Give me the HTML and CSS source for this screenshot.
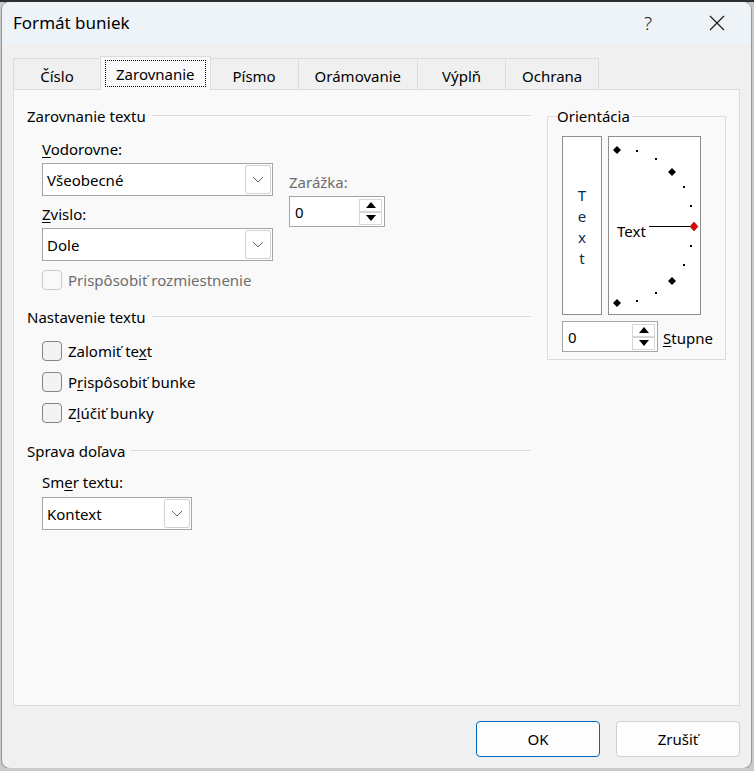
FILE: index.html
```html
<!DOCTYPE html>
<html lang="sk">
<head>
    <meta charset="UTF-8">
    <title>Formát buniek</title>
    <link rel="stylesheet" href="styles.css">
</head>
<body>

<div class="window">
    <div class="titlebar">
        <span class="title">Formát buniek</span>
        <span class="title-btn help">?</span>
        <span class="title-btn close">
            <svg width="16" height="16" viewBox="0 0 16 16"><path d="M1 1 L15 15 M15 1 L1 15" stroke="#1b1b1b" stroke-width="1.2" fill="none"/></svg>
        </span>
    </div>

    <div class="dialog-body">
        <div class="tabs">
            <div class="tab">Číslo</div>
            <div class="tab active"><span class="focus">Zarovnanie</span></div>
            <div class="tab">Písmo</div>
            <div class="tab">Orámovanie</div>
            <div class="tab">Výplň</div>
            <div class="tab">Ochrana</div>
        </div>

        <div class="panel">
            <div class="col-left">
                <div class="group-head">Zarovnanie textu</div>

                <div class="align-block">
                    <div class="align-main">
                        <div class="field-label"><u>V</u>odorovne:</div>
                        <div class="select wide">
                            <span>Všeobecné</span>
                            <span class="drop"><svg width="12" height="7" viewBox="0 0 12 7"><path d="M1 1 L6 6 L11 1" stroke="#666" fill="none"/></svg></span>
                        </div>
                        <div class="field-label second"><u>Z</u>vislo:</div>
                        <div class="select wide">
                            <span>Dole</span>
                            <span class="drop"><svg width="12" height="7" viewBox="0 0 12 7"><path d="M1 1 L6 6 L11 1" stroke="#666" fill="none"/></svg></span>
                        </div>
                    </div>
                    <div class="align-indent">
                        <div class="field-label muted">Zarážka:</div>
                        <div class="spin">
                            <span class="spin-value">0</span>
                            <span class="spin-btns">
                                <span class="spin-btn"><svg width="10" height="6" viewBox="0 0 10 6"><path d="M0 6 L5 0 L10 6 Z" fill="#000"/></svg></span>
                                <span class="spin-btn"><svg width="10" height="6" viewBox="0 0 10 6"><path d="M0 0 L5 6 L10 0 Z" fill="#000"/></svg></span>
                            </span>
                        </div>
                    </div>
                </div>

                <label class="check disabled"><span class="box"></span><span>Prispôsobiť rozmiestnenie</span></label>

                <div class="group-head">Nastavenie textu</div>
                <div class="check-list">
                    <label class="check"><span class="box"></span><span>Zalomiť te<u>x</u>t</span></label>
                    <label class="check"><span class="box"></span><span>P<u>r</u>ispôsobiť bunke</span></label>
                    <label class="check"><span class="box"></span><span>Z<u>l</u>účiť bunky</span></label>
                </div>

                <div class="group-head">Sprava doľava</div>
                <div class="field-label rtl-label">Sm<u>e</u>r textu:</div>
                <div class="select narrow">
                    <span>Kontext</span>
                    <span class="drop"><svg width="12" height="7" viewBox="0 0 12 7"><path d="M1 1 L6 6 L11 1" stroke="#666" fill="none"/></svg></span>
                </div>
            </div>

            <fieldset class="orient">
                <legend>Orientácia</legend>
                <div class="orient-boxes">
                    <div class="vertical-text">
                        <span>T</span><span>e</span><span>x</span><span>t</span>
                    </div>
                    <div class="dial">
                        <svg width="91" height="177" viewBox="0 0 91 177">
                            <g fill="#000">
                                <path d="M8 9 l4 4 l-4 4 l-4 -4 Z"/>
                                <path d="M63 31 l4 4 l-4 4 l-4 -4 Z"/>
                                <path d="M63 140 l4 4 l-4 4 l-4 -4 Z"/>
                                <path d="M8 162 l4 4 l-4 4 l-4 -4 Z"/>
                                <rect x="27" y="13" width="2" height="2"/>
                                <rect x="46" y="21" width="2" height="2"/>
                                <rect x="74" y="49" width="2" height="2"/>
                                <rect x="81" y="68" width="2" height="2"/>
                                <rect x="81" y="108" width="2" height="2"/>
                                <rect x="74" y="127" width="2" height="2"/>
                                <rect x="46" y="155" width="2" height="2"/>
                                <rect x="27" y="163" width="2" height="2"/>
                            </g>
                            <line x1="40" y1="89.5" x2="81" y2="89.5" stroke="#000" stroke-width="1"/>
                            <path d="M85 85 l4 4.5 l-4 4.5 l-4 -4.5 Z" fill="#e00000" stroke="#600" stroke-width="0.5"/>
                            <text x="8" y="100" class="dial-text">Text</text>
                        </svg>
                    </div>
                </div>
                <div class="orient-row">
                    <div class="spin">
                        <span class="spin-value">0</span>
                        <span class="spin-btns">
                            <span class="spin-btn"><svg width="10" height="6" viewBox="0 0 10 6"><path d="M0 6 L5 0 L10 6 Z" fill="#000"/></svg></span>
                            <span class="spin-btn"><svg width="10" height="6" viewBox="0 0 10 6"><path d="M0 0 L5 6 L10 0 Z" fill="#000"/></svg></span>
                        </span>
                    </div>
                    <span class="field-label"><u>S</u>tupne</span>
                </div>
            </fieldset>
        </div>

        <div class="buttons">
            <button class="btn primary">OK</button>
            <button class="btn">Zrušiť</button>
        </div>
    </div>
</div>

</body>
</html>
```

FILE: styles.css
```css
/* Global */
body {
    margin: 0;
    background-color: #c9c9c9;
    border-top: 2px solid #2e2e2e;
    font-family: 'Noto Sans', 'Open Sans', sans-serif;
    font-size: 15px;
    color: #000;
}

u {
    text-decoration-thickness: 1px;
    text-underline-offset: 2px;
}

/* Window */
.window {
    width: 749px;
    height: 766px;
    margin-left: 2px;
    background-color: #f0f0f0;
    border-radius: 8px;
    overflow: hidden;
    box-shadow: 0 0 0 1px rgba(0, 0, 0, 0.25);
    display: flex;
    flex-direction: column;
}

.titlebar {
    height: 42px;
    flex-shrink: 0;
    background-color: #eef3f8;
    display: flex;
    align-items: center;
    padding-left: 11px;
}

.title {
    font-size: 17px;
    margin-top: -2px;
}

.title-btn {
    width: 46px;
    height: 42px;
    display: flex;
    align-items: center;
    justify-content: center;
}

.help {
    margin-left: auto;
    margin-right: 23px;
    font-size: 19px;
    font-weight: 300;
    color: #222;
}

.close {
    margin-right: 11px;
}

.dialog-body {
    flex: 1;
    display: flex;
    flex-direction: column;
    padding: 12px 11px 11px 11px;
}

/* Tabs */
.tabs {
    display: flex;
    height: 33px;
    align-items: flex-end;
}

.tab {
    height: 31px;
    box-sizing: border-box;
    min-width: 89px;
    padding: 3px 16px 0;
    border: 1px solid #dcdcdc;
    border-bottom: none;
    margin-right: -1px;
    background-color: #f0f0f0;
    display: flex;
    align-items: center;
    justify-content: center;
}

.tab:first-child {
    min-width: 88px;
}

.tab.active {
    height: 34px;
    margin-bottom: -1px;
    background-color: #f9f9f9;
    position: relative;
    z-index: 1;
    padding: 3px 4px 3px;
}

.focus {
    border: 1px dotted #000;
    height: 100%;
    box-sizing: border-box;
    padding: 0 10px;
    display: flex;
    align-items: center;
}

/* Panel */
.panel {
    height: 617px;
    box-sizing: border-box;
    background-color: #f9f9f9;
    border: 1px solid #dcdcdc;
    padding: 16px 13px 0 13px;
    display: flex;
    gap: 16px;
    align-items: flex-start;
}

.col-left {
    width: 504px;
    display: flex;
    flex-direction: column;
}

.group-head {
    height: 20px;
    display: flex;
    align-items: center;
}

.group-head::after {
    content: "";
    flex: 1;
    border-top: 1px solid #dcdcdc;
    margin-left: 6px;
    margin-top: -2px;
}

.field-label {
    line-height: 20px;
}

.muted {
    color: #6d6d6d;
}

/* Alignment block */
.align-block {
    display: flex;
    gap: 16px;
    margin-top: 13px;
    padding-left: 15px;
}

.align-main {
    display: flex;
    flex-direction: column;
    width: 231px;
}

.align-main .select {
    margin-top: 4px;
}

.field-label.second {
    margin-top: 8px;
}

.align-indent {
    margin-top: 33px;
    display: flex;
    flex-direction: column;
    gap: 4px;
}

/* Select boxes */
.select {
    height: 33px;
    box-sizing: border-box;
    border: 1px solid #a5a5a5;
    background-color: #fff;
    display: flex;
    align-items: center;
    padding-left: 4px;
}

.select.narrow {
    width: 150px;
    margin-left: 15px;
    margin-top: 5px;
}

.drop {
    margin-left: auto;
    margin-right: 1px;
    width: 26px;
    height: 29px;
    box-sizing: border-box;
    border: 1px solid #d2d2d2;
    border-radius: 2px;
    display: flex;
    align-items: center;
    justify-content: center;
}

/* Spin boxes */
.spin {
    width: 96px;
    height: 31px;
    box-sizing: border-box;
    border: 1px solid #a5a5a5;
    background-color: #fff;
    display: flex;
    align-items: center;
    padding-left: 5px;
}

.spin-btns {
    margin-left: auto;
    margin-right: 2px;
    display: flex;
    flex-direction: column;
}

.spin-btn {
    width: 23px;
    height: 13px;
    box-sizing: border-box;
    border: 1px solid #d6d6d6;
    display: flex;
    align-items: center;
    justify-content: center;
}

/* Checkboxes */
.check {
    display: flex;
    align-items: center;
    gap: 6px;
    height: 20px;
    padding-left: 15px;
}

.box {
    width: 20px;
    height: 20px;
    box-sizing: border-box;
    border: 1px solid #858585;
    border-radius: 4px;
    background-color: #f3f3f3;
}

.check.disabled {
    color: #6d6d6d;
    margin-top: 9px;
    margin-bottom: 17px;
}

.check.disabled .box {
    border-color: #cacaca;
    background-color: #f9f9f9;
}

.check-list {
    display: flex;
    flex-direction: column;
    gap: 11px;
    margin-top: 14px;
    margin-bottom: 18px;
}

.rtl-label {
    margin-top: 11px;
    padding-left: 15px;
}

/* Orientation */
.orient {
    width: 179px;
    box-sizing: border-box;
    margin: 0;
    border: 1px solid #dcdcdc;
    padding: 10px 0 7px 14px;
}

.orient legend {
    padding: 0 2px 0 0;
    margin-left: -5px;
    line-height: 20px;
}

.orient-boxes {
    display: flex;
    gap: 6px;
}

.vertical-text {
    width: 40px;
    height: 179px;
    box-sizing: border-box;
    border: 1px solid #8e8e8e;
    background-color: #fff;
    display: flex;
    flex-direction: column;
    align-items: center;
    justify-content: center;
    line-height: 21px;
    padding-top: 3px;
    color: #0c2a4a;
}

.dial {
    width: 93px;
    height: 179px;
    box-sizing: border-box;
    border: 1px solid #8e8e8e;
    background-color: #fff;
}

.dial svg {
    display: block;
}

.dial-text {
    font-family: 'Noto Sans', 'Open Sans', sans-serif;
    font-size: 15px;
    fill: #000;
}

.orient-row {
    display: flex;
    align-items: center;
    gap: 5px;
    margin-top: 6px;
}

.orient-row .field-label {
    margin-top: 2px;
}

/* Buttons */
.buttons {
    display: flex;
    justify-content: flex-end;
    gap: 16px;
    margin-top: 15px;
}

.btn {
    width: 124px;
    height: 36px;
    font-family: inherit;
    font-size: 15px;
    color: #000;
    background-color: #fdfdfd;
    border: 1px solid #d0d0d0;
    border-radius: 4px;
}

.btn.primary {
    border-color: #0067c0;
}
```
